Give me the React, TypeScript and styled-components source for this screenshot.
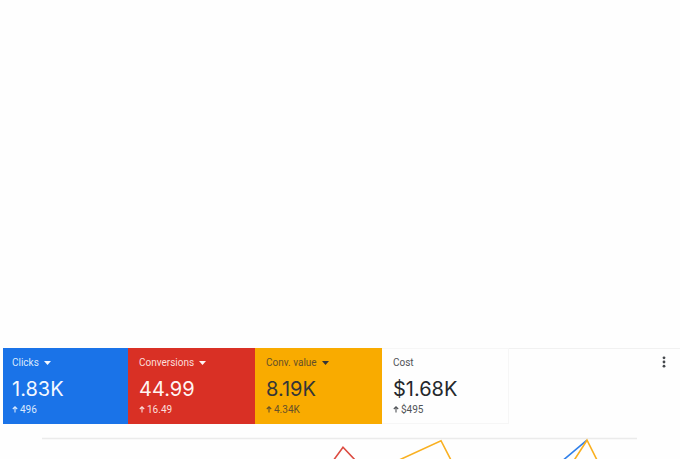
import React from 'react';
import styled, { createGlobalStyle } from 'styled-components';

const GlobalStyle = createGlobalStyle`
  * {
    box-sizing: border-box;
  }

  body {
    margin: 0;
    background: #fefefe;
    font-family: Roboto, "Liberation Sans", sans-serif;
    overflow: hidden;
  }
`;

const Page = styled.main`
  padding-top: 348px;
`;

const Scorecard = styled.section`
  display: flex;
  justify-content: space-between;
  align-items: flex-start;
  padding-left: 3px;
`;

const Metrics = styled.div`
  display: grid;
  grid-template-columns: 125px repeat(3, 127px);
`;

const Metric = styled.article<{ $bg: string; $color: string; $value: string }>`
  display: flex;
  flex-direction: column;
  align-items: flex-start;
  height: 76px;
  padding: 8px 0 0 9px;
  background: ${p => p.$bg};
  color: ${p => p.$color};

  strong {
    color: ${p => p.$value};
  }

  &:not(:first-child) {
    padding-left: 11px;
  }

  &:last-child {
    border: solid #f6f6f6;
    border-width: 1px 1px 1px 0;
    padding-top: 7px;
  }
`;

const MetricLabel = styled.span`
  font-size: 10px;
  line-height: 14px;
`;

const MetricButton = styled.button`
  display: flex;
  align-items: center;
  gap: 5px;
  padding: 0;
  border: 0;
  background: none;
  color: inherit;
  font: inherit;
  font-size: 10px;
  line-height: 14px;
  cursor: pointer;
`;

const Value = styled.strong`
  margin-top: 6px;
  font-family: Inter, Roboto, sans-serif;
  font-size: 20px;
  font-weight: 400;
  line-height: 26px;
`;

const Change = styled.span`
  display: flex;
  align-items: center;
  gap: 2px;
  margin-top: 2px;
  font-size: 10px;
  line-height: 12px;
`;

const MenuButton = styled.button`
  display: flex;
  justify-content: center;
  width: 32px;
  padding: 7px 0;
  border: 0;
  background: none;
  color: #45484c;
  cursor: pointer;
`;

const Toolbar = styled.div`
  flex: 1;
  display: flex;
  justify-content: flex-end;
  border-top: 1px solid #f1f1f1;
`;

const ChartArea = styled.section`
  margin: 13px 43px 0 42px;

  svg {
    display: block;
    width: 100%;
    height: 22px;
  }
`;

const metrics = [
  { label: 'Clicks', value: '1.83K', change: '496', bg: '#1a73e8', color: '#d9e8fd', strong: '#f4f8ff', menu: true },
  { label: 'Conversions', value: '44.99', change: '16.49', bg: '#d93025', color: '#fbdedb', strong: '#fff5f4', menu: true },
  { label: 'Conv. value', value: '8.19K', change: '4.34K', bg: '#f9ab00', color: '#655029', strong: '#343638', menu: true },
  { label: 'Cost', value: '$1.68K', change: '$495', bg: '#fefefe', color: '#505357', strong: '#25282c', menu: false },
];

const Caret = ({ color }: { color: string }) => (
  <svg width="7" height="4" viewBox="0 0 7 4" aria-hidden="true">
    <path d="M0 0h7L3.5 4z" fill={color} />
  </svg>
);

const UpArrow = () => (
  <svg width="6" height="8" viewBox="0 0 6 8" aria-hidden="true">
    <path d="M3 6.5V1M0.8 3 3 0.8 5.2 3" fill="none" stroke="currentColor" strokeWidth="1.1" />
  </svg>
);

export default function App() {
  return (
    <>
      <GlobalStyle />
      <Page>
        <Scorecard>
          <Metrics>
            {metrics.map(m => (
              <Metric key={m.label} $bg={m.bg} $color={m.color} $value={m.strong}>
                {m.menu ? (
                  <MetricButton type="button">
                    {m.label}
                    <Caret color={m.strong} />
                  </MetricButton>
                ) : (
                  <MetricLabel>{m.label}</MetricLabel>
                )}
                <Value>{m.value}</Value>
                <Change>
                  <UpArrow />
                  {m.change}
                </Change>
              </Metric>
            ))}
          </Metrics>
          <Toolbar>
            <MenuButton type="button" aria-label="More options">
              <svg width="4" height="12" viewBox="0 0 4 12" fill="currentColor">
                <circle cx="2" cy="1.8" r="1.4" />
                <circle cx="2" cy="6" r="1.4" />
                <circle cx="2" cy="10.2" r="1.4" />
              </svg>
            </MenuButton>
          </Toolbar>
        </Scorecard>

        <ChartArea>
          <svg viewBox="0 0 595 22" preserveAspectRatio="none" role="img" aria-label="Performance chart">
            <path d="M0 1.5h595" stroke="#ebebeb" strokeWidth="1.4" />
            <g fill="none" strokeWidth="1.6">
              <path d="M291 24 301 10.2 314 24" stroke="#dc4b41" />
              <path d="M519 25 545 3.2" stroke="#2f7fe9" />
              <path d="M355 24 399 3.7 410 25M531 25 545 3.2 556 25" stroke="#f9b021" />
            </g>
          </svg>
        </ChartArea>
      </Page>
    </>
  );
}
